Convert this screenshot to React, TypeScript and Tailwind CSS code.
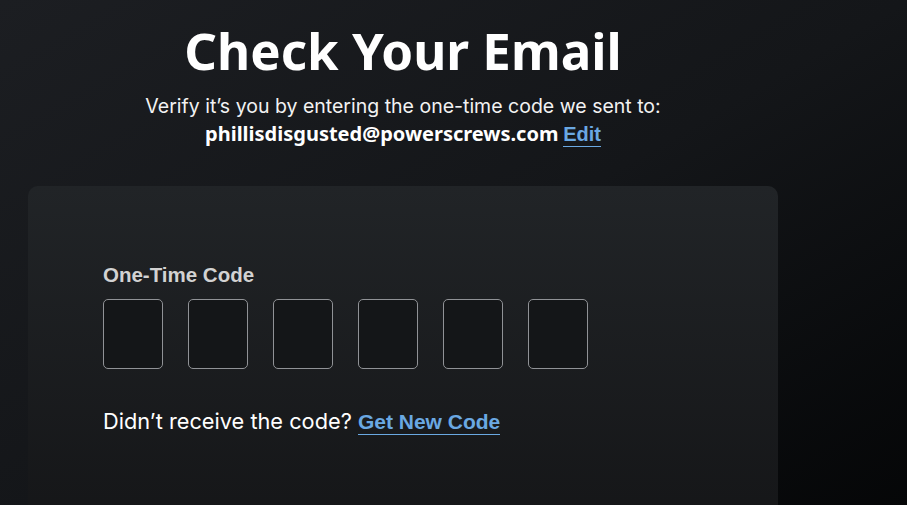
import React from "react";

const CODE_LENGTH = 6;

export default function App() {
  return (
    <div
      className="min-h-screen w-full overflow-hidden bg-gradient-to-br from-[#1c1e22] via-[#141619] to-[#050607]"
      style={{ fontFamily: 'Inter, "Noto Sans", sans-serif' }}
    >
      <div className="w-[750px] ml-[28px] pt-[16px]">
        {/* Header */}
        <div className="flex flex-col items-center text-center">
          <h1
            className="text-[51px] leading-[68px] font-bold text-white"
            style={{ fontFamily: '"Noto Sans", sans-serif' }}
          >
            Check Your Email
          </h1>
          <p className="mt-[9px] text-[19.5px] leading-[27px] text-[#f2f2f2]">
            Verify it’s you by entering the one-time code we sent to:
          </p>
          <p className="text-[20px] leading-[27px] text-white font-bold">
            <span style={{ fontFamily: '"Noto Sans", sans-serif' }}>
              phillisdisgusted@powerscrews.com
            </span>{" "}
            <a
              className="text-[#6aa8e2] border-b border-[#6aa8e2] pb-[1px]"
              style={{ fontFamily: '"Liberation Sans", Arial, sans-serif' }}
            >
              Edit
            </a>
          </p>
        </div>

        {/* Code card */}
        <div className="mt-[38px] h-[340px] rounded-[10px] bg-gradient-to-b from-[#212427] to-[#151618] px-[75px] pt-[77px]">
          <label
            className="block text-[20.5px] leading-[24px] font-bold text-[#d2d2d2]"
            style={{ fontFamily: '"Liberation Sans", Arial, sans-serif' }}
          >
            One-Time Code
          </label>
          <div className="mt-[12px] flex gap-[25px]">
            {Array.from({ length: CODE_LENGTH }).map((_, i) => (
              <input
                key={i}
                maxLength={1}
                className="w-[60px] h-[70px] rounded-[5px] border border-[#909296] bg-[#141618] text-center text-white text-2xl outline-none"
              />
            ))}
          </div>
          <p className="mt-[37px] text-[21.75px] leading-[30px] text-white">
            Didn’t receive the code?{" "}
            <a
              className="text-[21px] font-bold text-[#6aa8e2] border-b border-[#6aa8e2] pb-[1px]"
              style={{ fontFamily: '"Liberation Sans", Arial, sans-serif' }}
            >
              Get New Code
            </a>
          </p>
        </div>
      </div>
    </div>
  );
}
